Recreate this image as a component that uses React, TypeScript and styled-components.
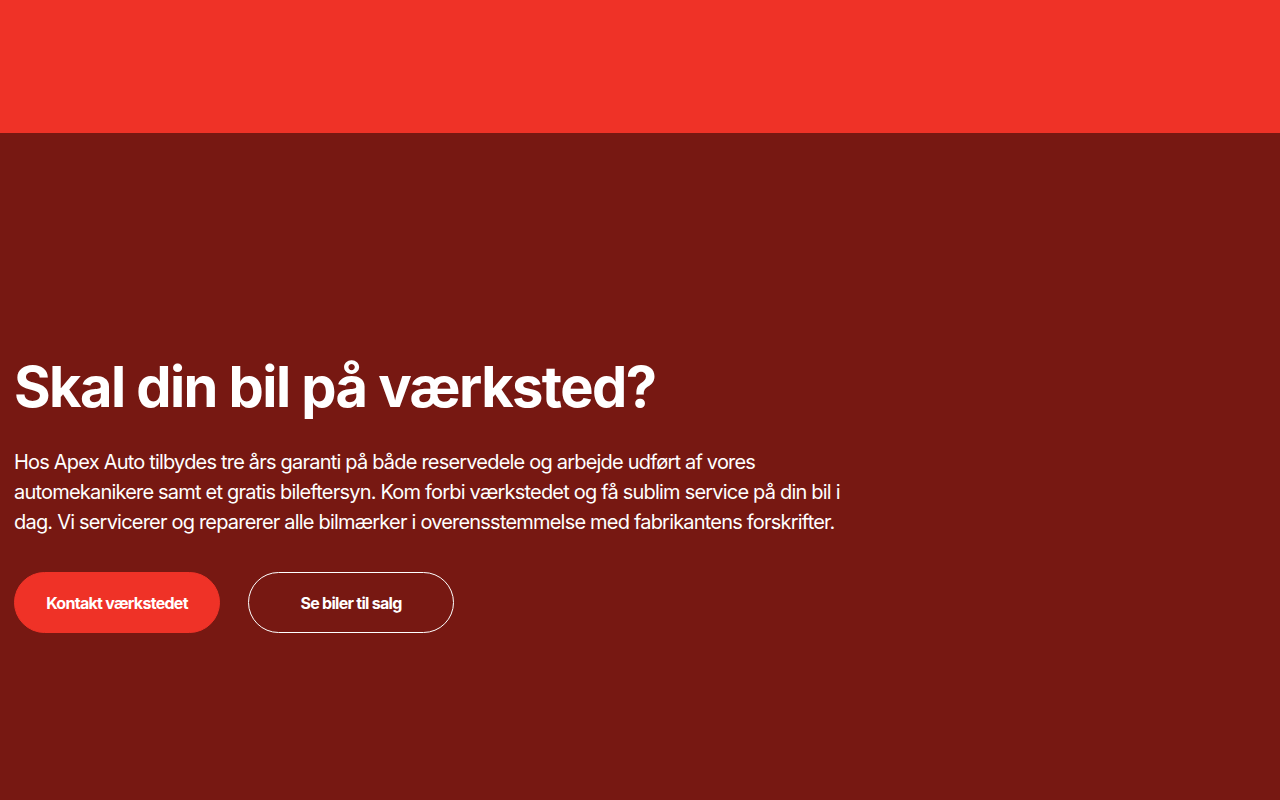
import styled, { createGlobalStyle } from "styled-components";

const Global = createGlobalStyle`
  html, body { margin: 0; padding: 0; }
  body {
    background-color: #771812;
    font-family: Inter, "Noto Sans", sans-serif;
    color: #ffffff;
    -webkit-font-smoothing: antialiased;
  }
`;

const TopBar = styled.header`
  height: 133px;
  background-color: #ef3227;
`;

const Hero = styled.section`
  background-color: #771812;
  min-height: 667px;
  padding: 223px 14px 0 14px;
  box-sizing: border-box;
`;

const Title = styled.h1`
  margin: 0;
  font-size: 56px;
  line-height: 62px;
  font-weight: 700;
  letter-spacing: -0.028em;
`;

const Lead = styled.p`
  margin: 29px 0 0 0;
  max-width: 840px;
  font-size: 20px;
  line-height: 30px;
  font-weight: 400;
  letter-spacing: -0.04em;
`;

const Actions = styled.div`
  display: flex;
  gap: 28px;
  margin: 35px 0 0 0;
`;

const Button = styled.a<{ variant?: "solid" | "outline" }>`
  display: inline-flex;
  align-items: center;
  justify-content: center;
  box-sizing: border-box;
  width: 206px;
  height: 61px;
  border-radius: 999px;
  font-size: 16px;
  font-weight: 700;
  letter-spacing: -0.045em;
  color: #ffffff;
  text-decoration: none;
  cursor: pointer;
  background-color: ${(p) => (p.variant === "outline" ? "transparent" : "#ef3227")};
  border: 1px solid ${(p) => (p.variant === "outline" ? "#ffffff" : "#ef3227")};
`;

export default function App() {
  return (
    <>
      <Global />
      <TopBar />
      <Hero>
        <Title>Skal din bil på værksted?</Title>
        <Lead>
          Hos Apex Auto tilbydes tre års garanti på både reservedele og arbejde udført af vores
          automekanikere samt et gratis bileftersyn. Kom forbi værkstedet og få sublim service på din bil i
          dag. Vi servicerer og reparerer alle bilmærker i overensstemmelse med fabrikantens forskrifter.
        </Lead>
        <Actions>
          <Button>Kontakt værkstedet</Button>
          <Button variant="outline">Se biler til salg</Button>
        </Actions>
      </Hero>
    </>
  );
}
